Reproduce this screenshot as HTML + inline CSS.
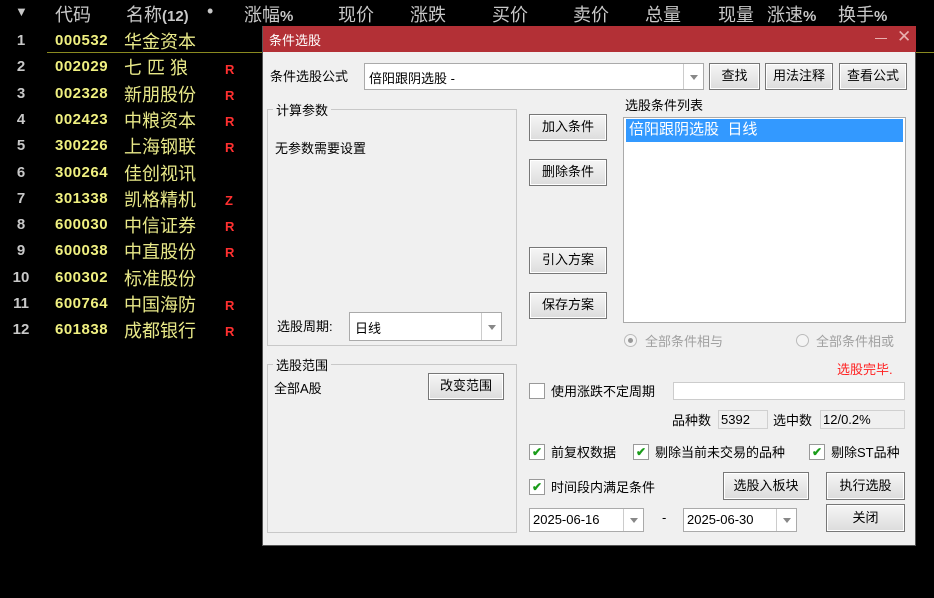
<!DOCTYPE html>
<html><head><meta charset="utf-8"><style>
*{margin:0;padding:0;box-sizing:border-box}
body{width:934px;height:598px;background:#000;position:relative;overflow:hidden;font-family:"Liberation Sans","Noto Sans CJK SC",sans-serif}
.a{position:absolute;white-space:nowrap}
.h{color:#c8c8c8;font-size:18px;top:1px}
.n{color:#c8c8c8;font-size:15px;font-weight:bold;width:24px;text-align:center}
.c{color:#f0f080;font-size:15px;font-weight:bold;left:55px;letter-spacing:0.5px}
.m{color:#e8e888;font-size:18px;left:124px}
.r{color:#ff3030;font-size:13px;font-weight:bold;left:225px}
.d{font-size:13px;color:#000}
.btn{position:absolute;background:linear-gradient(#f6f6f6,#dcdcdc);border:1px solid #777;box-shadow:inset 0 0 0 1px #fff;font-size:13px;text-align:center;color:#000}
.box{position:absolute;background:#fff;border:1px solid #aaa}
.grp{position:absolute;border:1px solid #c8c8c8}
.gl{position:absolute;background:#f0f0f0;font-size:13px;padding:0 3px}
.arr{position:absolute;right:0;top:0;bottom:0;width:20px;border-left:1px solid #ccc}
.arr:after{content:"";position:absolute;left:6px;top:50%;margin-top:-2px;border:4px solid transparent;border-top:5px solid #888}
.cb{position:absolute;width:16px;height:16px;background:#fff;border:1px solid #999;color:#1a9c1a;font-size:12px;line-height:14px;text-align:center;font-weight:bold}
.gray{color:#a0a0a0}
.rad{position:absolute;width:13px;height:13px;border-radius:50%;border:1px solid #bbb;background:#f4f4f4}
</style></head><body>
<div class="a h" style="left:15px;top:4px;font-size:13px">▼</div>
<div class="a h" style="left:55px">代码</div>
<div class="a h" style="left:126px">名称<b style="font-size:15px">(12)</b></div>
<div class="a h" style="left:207px">•</div>
<div class="a h" style="left:244px">涨幅<b style="font-size:15px">%</b></div>
<div class="a h" style="left:338px">现价</div>
<div class="a h" style="left:410px">涨跌</div>
<div class="a h" style="left:492px">买价</div>
<div class="a h" style="left:573px">卖价</div>
<div class="a h" style="left:645px">总量</div>
<div class="a h" style="left:718px">现量</div>
<div class="a h" style="left:767px">涨速<b style="font-size:15px">%</b></div>
<div class="a h" style="left:838px">换手<b style="font-size:15px">%</b></div>
<div class="a" style="left:47px;top:52px;width:887px;height:1px;background:#8a8a20"></div>

<div class="a n" style="left:9px;top:32px">1</div><div class="a c" style="top:32px">000532</div><div class="a m" style="top:28px">华金资本</div>
<div class="a n" style="left:9px;top:58px">2</div><div class="a c" style="top:58px">002029</div><div class="a m" style="top:54px">七 匹 狼</div><div class="a r" style="top:62px">R</div>
<div class="a n" style="left:9px;top:85px">3</div><div class="a c" style="top:85px">002328</div><div class="a m" style="top:81px">新朋股份</div><div class="a r" style="top:88px">R</div>
<div class="a n" style="left:9px;top:111px">4</div><div class="a c" style="top:111px">002423</div><div class="a m" style="top:107px">中粮资本</div><div class="a r" style="top:114px">R</div>
<div class="a n" style="left:9px;top:137px">5</div><div class="a c" style="top:137px">300226</div><div class="a m" style="top:133px">上海钢联</div><div class="a r" style="top:140px">R</div>
<div class="a n" style="left:9px;top:164px">6</div><div class="a c" style="top:164px">300264</div><div class="a m" style="top:160px">佳创视讯</div>
<div class="a n" style="left:9px;top:190px">7</div><div class="a c" style="top:190px">301338</div><div class="a m" style="top:186px">凯格精机</div><div class="a r" style="top:193px">Z</div>
<div class="a n" style="left:9px;top:216px">8</div><div class="a c" style="top:216px">600030</div><div class="a m" style="top:212px">中信证券</div><div class="a r" style="top:219px">R</div>
<div class="a n" style="left:9px;top:242px">9</div><div class="a c" style="top:242px">600038</div><div class="a m" style="top:238px">中直股份</div><div class="a r" style="top:245px">R</div>
<div class="a n" style="left:9px;top:269px">10</div><div class="a c" style="top:269px">600302</div><div class="a m" style="top:265px">标准股份</div>
<div class="a n" style="left:9px;top:295px">11</div><div class="a c" style="top:295px">600764</div><div class="a m" style="top:291px">中国海防</div><div class="a r" style="top:298px">R</div>
<div class="a n" style="left:9px;top:321px">12</div><div class="a c" style="top:321px">601838</div><div class="a m" style="top:317px">成都银行</div><div class="a r" style="top:324px">R</div>

<div class="a" style="left:262px;top:26px;width:654px;height:520px;background:#f0f0f0;border:1px solid #555;border-top:none">
 <div class="a" style="left:0;top:0;width:653px;height:26px;background:#b33036"></div>
 <div class="a" style="left:6px;top:4px;color:#fff;font-size:13px">条件选股</div>
 <div class="a" style="left:612px;top:12px;width:12px;height:1px;background:#e8b0b0"></div>
 <div class="a" style="left:634px;top:1px;color:#e8b0b0;font-size:17px">✕</div>
</div>
<div class="a d" style="left:270px;top:66px">条件选股公式</div>
<div class="box" style="left:364px;top:63px;width:340px;height:27px"><span class="a d" style="left:4px;top:4px">倍阳跟阴选股 -</span><div class="arr"></div></div>
<div class="btn" style="left:709px;top:63px;width:51px;height:27px;line-height:24px">查找</div>
<div class="btn" style="left:765px;top:63px;width:68px;height:27px;line-height:24px">用法注释</div>
<div class="btn" style="left:839px;top:63px;width:68px;height:27px;line-height:24px">查看公式</div>

<div class="grp" style="left:267px;top:109px;width:250px;height:237px"></div>
<div class="gl" style="left:273px;top:100px">计算参数</div>
<div class="a d" style="left:275px;top:138px">无参数需要设置</div>
<div class="a d" style="left:277px;top:316px">选股周期:</div>
<div class="box" style="left:349px;top:312px;width:153px;height:29px"><span class="a d" style="left:5px;top:5px">日线</span><div class="arr"></div></div>

<div class="grp" style="left:267px;top:364px;width:250px;height:169px"></div>
<div class="gl" style="left:273px;top:355px">选股范围</div>
<div class="a d" style="left:274px;top:378px">全部A股</div>
<div class="btn" style="left:428px;top:373px;width:76px;height:27px;line-height:24px">改变范围</div>

<div class="btn" style="left:529px;top:114px;width:78px;height:27px;line-height:24px">加入条件</div>
<div class="btn" style="left:529px;top:159px;width:78px;height:27px;line-height:24px">删除条件</div>
<div class="btn" style="left:529px;top:247px;width:78px;height:27px;line-height:24px">引入方案</div>
<div class="btn" style="left:529px;top:292px;width:78px;height:27px;line-height:24px">保存方案</div>

<div class="a d" style="left:625px;top:95px">选股条件列表</div>
<div class="box" style="left:623px;top:117px;width:283px;height:206px"><div class="a" style="left:2px;top:1px;width:277px;height:23px;background:#3399ff;color:#fff;font-size:15px;padding-left:3px;line-height:21px">倍阳跟阴选股&nbsp; 日线</div></div>

<div class="rad" style="left:624px;top:334px"><div class="a" style="left:3px;top:3px;width:5px;height:5px;border-radius:50%;background:#999"></div></div>
<div class="a gray" style="left:645px;top:331px;font-size:13px">全部条件相与</div>
<div class="rad" style="left:796px;top:334px"></div>
<div class="a gray" style="left:816px;top:331px;font-size:13px">全部条件相或</div>
<div class="a" style="left:837px;top:359px;font-size:13px;color:#ff2020">选股完毕.</div>

<div class="cb" style="left:529px;top:383px"></div>
<div class="a d" style="left:551px;top:381px">使用涨跌不定周期</div>
<div class="box" style="left:673px;top:382px;width:232px;height:18px;border-color:#ccc"></div>
<div class="a d" style="left:672px;top:410px">品种数</div>
<div class="a" style="left:718px;top:410px;width:50px;height:19px;border:1px solid #d0d0d0;font-size:13px;padding-left:2px;line-height:17px">5392</div>
<div class="a d" style="left:773px;top:410px">选中数</div>
<div class="a" style="left:820px;top:410px;width:85px;height:19px;border:1px solid #d0d0d0;font-size:13px;padding-left:2px;line-height:17px">12/0.2%</div>

<div class="cb" style="left:529px;top:444px">✔</div><div class="a d" style="left:551px;top:442px">前复权数据</div>
<div class="cb" style="left:633px;top:444px">✔</div><div class="a d" style="left:655px;top:442px">剔除当前未交易的品种</div>
<div class="cb" style="left:809px;top:444px">✔</div><div class="a d" style="left:831px;top:442px">剔除ST品种</div>
<div class="cb" style="left:529px;top:479px">✔</div><div class="a d" style="left:551px;top:477px">时间段内满足条件</div>
<div class="btn" style="left:723px;top:472px;width:86px;height:28px;line-height:25px">选股入板块</div>
<div class="btn" style="left:826px;top:472px;width:79px;height:28px;line-height:25px">执行选股</div>
<div class="box" style="left:529px;top:508px;width:115px;height:24px"><span class="a d" style="left:3px;top:3px">2025-06-16</span><div class="arr"></div></div>
<div class="a d" style="left:662px;top:510px">-</div>
<div class="box" style="left:683px;top:508px;width:114px;height:24px"><span class="a d" style="left:3px;top:3px">2025-06-30</span><div class="arr"></div></div>
<div class="btn" style="left:826px;top:504px;width:79px;height:28px;line-height:25px">关闭</div>
</body></html>
